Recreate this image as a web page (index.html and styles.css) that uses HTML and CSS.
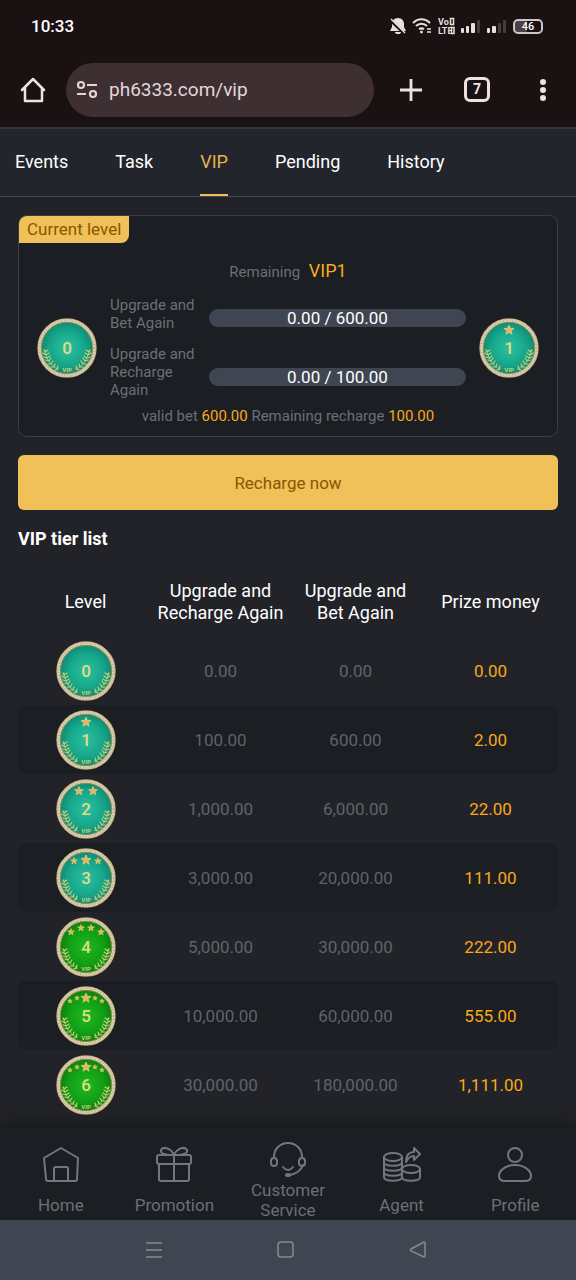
FILE: index.html
```html
<!DOCTYPE html>
<html lang="en">
<head>
    <meta charset="UTF-8">
    <meta name="viewport" content="width=device-width, initial-scale=1.0">
    <title>VIP</title>
    <link rel="stylesheet" href="styles.css">
</head>
<body>
    <!-- shared shapes for the level medals -->
    <svg class="defs" width="0" height="0" aria-hidden="true">
        <defs>
            <radialGradient id="teal">
                <stop offset="0" stop-color="#2cbfa0"/>
                <stop offset="0.6" stop-color="#17a88b"/>
                <stop offset="1" stop-color="#0b8471"/>
            </radialGradient>
            <radialGradient id="green">
                <stop offset="0" stop-color="#1fb81f"/>
                <stop offset="0.6" stop-color="#11a016"/>
                <stop offset="1" stop-color="#087a0c"/>
            </radialGradient>
            <path id="star" d="M0-5 1.4-1.7 5-1.5 2.2.8 3.1 4.3 0 2.3-3.1 4.3-2.2.8-5-1.5-1.4-1.7z" fill="#edb35a" stroke="#f5d98c" stroke-width="0.6"/>
            <g id="laurel" fill="none" stroke="#c5cf78" stroke-linecap="round">
                <path d="M8 32C9 41 14 48 21 51" stroke-width="0.7"/>
                <path d="M8 34l-1-2M8 34l3-2M9 37l-3-2M9 37l3-2M10 40l-3-1M10 40l3-2M12 43l-3-1M12 43l2-3M14 46l-3 0M14 46l2-3M17 49l-3 0M17 49l1-3M21 51l-3 1M20 51l1-3" stroke-width="1.2"/>
            </g>
            <g id="medal">
                <circle cx="30" cy="30" r="29" fill="none" stroke="#c9a468" stroke-width="1.4"/>
                <circle cx="30" cy="30" r="27.4" fill="none" stroke="#d6cfb4" stroke-width="3"/>
                <circle cx="30" cy="30" r="27.4" fill="none" stroke="#bcb398" stroke-width="2" stroke-dasharray="1 2"/>
                <circle cx="30" cy="30" r="25.6" fill="none" stroke="#a98a45" stroke-width="0.8"/>
                <use href="#laurel"/>
                <use href="#laurel" transform="matrix(-1 0 0 1 60 0)"/>
                <text x="30" y="54" class="medal-vip">VIP</text>
            </g>
        </defs>
    </svg>

    <header class="browser">
        <div class="status">
            <span class="clock">10:33</span>
            <div class="status-icons">
                <svg width="16" height="18" viewBox="0 0 16 18"><path d="M8 1c4 0 6 3 6 6v3l2 4H0l2-4V7c0-3 2-6 6-6z" fill="#e8dfe0"/><path d="M5 15h6a3 2 0 0 1-6 0z" fill="#e8dfe0"/><path d="M0 3l15 14" stroke="#1a1112" stroke-width="3"/><path d="M1 2l14 14" stroke="#e8dfe0" stroke-width="1.4"/></svg>
                <svg width="20" height="18" viewBox="0 0 20 18" fill="none" stroke="#e8dfe0" stroke-width="2"><path d="M1 6c5-5 12-5 17 0M4 9c3-3 8-3 11 0M7 12c2-1 3-1 5 0"/><circle cx="9.500" cy="15" r="1" fill="#e8dfe0" stroke-width="1"/><path d="M15 12h4M15 15h4" stroke-width="1.6"/></svg>
                <svg width="17" height="18" viewBox="0 0 17 18"><text x="0" y="8" class="volte">Vo</text><text x="0" y="17" class="volte">LTE</text><path d="M12.500 1.500h3v6h-3zM13.500 10.500h2.500v6h-2.500z" fill="none" stroke="#e8dfe0" stroke-width="1.500"/></svg>
                <svg width="20" height="18" viewBox="0 0 20 18" fill="#e8dfe0"><rect x="0" y="11" width="3" height="5" rx="1"/><rect x="5" y="9" width="3" height="7" rx="1"/><rect x="10" y="6" width="4" height="10" rx="1"/><rect x="16" y="3" width="3" height="13" rx="1" fill="#463b3d"/></svg>
                <svg width="20" height="18" viewBox="0 0 20 18" fill="#e8dfe0"><rect x="0" y="11" width="3" height="5" rx="1"/><rect x="5" y="9" width="4" height="7" rx="1"/><rect x="11" y="6" width="3" height="10" rx="1" fill="#463b3d"/><rect x="16" y="3" width="3" height="13" rx="1" fill="#463b3d"/></svg>
                <span class="battery">46</span>
            </div>
        </div>
        <div class="toolbar">
            <button class="icon-btn" aria-label="Home page">
                <svg width="26" height="26" viewBox="0 0 26 26" fill="none" stroke="#f0e2e3" stroke-width="2.500" stroke-linejoin="round" stroke-linecap="round"><path d="M2 13 13 2l11 11M5 11v13h17V11"/></svg>
            </button>
            <div class="address">
                <svg width="22" height="20" viewBox="0 0 22 20" fill="none" stroke="#e4d6d8" stroke-width="2.200"><circle cx="5" cy="5" r="3"/><path d="M11 5h10M1 14h9"/><circle cx="17" cy="14" r="3"/></svg>
                <input class="url" type="text" value="ph6333.com/vip" aria-label="Address">
            </div>
            <button class="icon-btn" aria-label="New tab">
                <svg width="24" height="24" viewBox="0 0 24 24" stroke="#f0e2e3" stroke-width="2.800"><path d="M1 12h22M12 1v22"/></svg>
            </button>
            <button class="icon-btn" aria-label="Open tabs"><span class="tab-count">7</span></button>
            <button class="icon-btn" aria-label="Menu">
                <svg width="24" height="24" viewBox="0 0 24 24" fill="#f0e2e3"><circle cx="12" cy="4" r="3"/><circle cx="12" cy="12" r="3"/><circle cx="12" cy="20" r="3"/></svg>
            </button>
        </div>
    </header>

    <nav class="tabs">
        <a href="#events">Events</a>
        <a href="#task">Task</a>
        <a href="#vip" class="active">VIP</a>
        <a href="#pending">Pending</a>
        <a href="#history">History</a>
    </nav>

    <main>
        <section class="card">
            <span class="tag">Current level</span>
            <p class="remaining">Remaining <span class="next">VIP1</span></p>
            <div class="progress">
                <svg class="medal" viewBox="0 0 60 60"><circle cx="30" cy="30" r="28" fill="url(#teal)"/><use href="#medal"/><text x="30" y="36" class="medal-num">0</text></svg>
                <div class="labels">
                    <span>Upgrade and Bet Again</span>
                    <span>Upgrade and Recharge Again</span>
                </div>
                <div class="bars">
                    <div class="bar">0.00 / 600.00</div>
                    <div class="bar">0.00 / 100.00</div>
                </div>
                <svg class="medal" viewBox="0 0 60 60"><circle cx="30" cy="30" r="28" fill="url(#teal)"/><use href="#medal"/><use href="#star" x="30" y="12"/><text x="30" y="36" class="medal-num">1</text></svg>
            </div>
            <p class="summary">valid bet <span>600.00</span> Remaining recharge <span>100.00</span></p>
        </section>

        <button class="recharge">Recharge now</button>

        <h2>VIP tier list</h2>
        <table>
            <thead>
                <tr>
                    <th>Level</th>
                    <th>Upgrade and Recharge Again</th>
                    <th>Upgrade and<br>Bet Again</th>
                    <th>Prize money</th>
                </tr>
            </thead>
            <tbody>
                <tr>
                    <td><svg class="medal" viewBox="0 0 60 60"><circle cx="30" cy="30" r="28" fill="url(#teal)"/><use href="#medal"/><text x="30" y="36" class="medal-num">0</text></svg></td>
                    <td>0.00</td>
                    <td>0.00</td>
                    <td>0.00</td>
                </tr>
                <tr>
                    <td><svg class="medal" viewBox="0 0 60 60"><circle cx="30" cy="30" r="28" fill="url(#teal)"/><use href="#medal"/><use href="#star" x="30" y="12"/><text x="30" y="36" class="medal-num">1</text></svg></td>
                    <td>100.00</td>
                    <td>600.00</td>
                    <td>2.00</td>
                </tr>
                <tr>
                    <td><svg class="medal" viewBox="0 0 60 60"><circle cx="30" cy="30" r="28" fill="url(#teal)"/><use href="#medal"/><use href="#star" transform="translate(23 12) scale(.9)"/><use href="#star" transform="translate(37 12) scale(.9)"/><text x="30" y="36" class="medal-num">2</text></svg></td>
                    <td>1,000.00</td>
                    <td>6,000.00</td>
                    <td>22.00</td>
                </tr>
                <tr>
                    <td><svg class="medal" viewBox="0 0 60 60"><circle cx="30" cy="30" r="28" fill="url(#teal)"/><use href="#medal"/><use href="#star" transform="translate(18 13) scale(.7)"/><use href="#star" x="30" y="12"/><use href="#star" transform="translate(42 13) scale(.7)"/><text x="30" y="36" class="medal-num">3</text></svg></td>
                    <td>3,000.00</td>
                    <td>20,000.00</td>
                    <td>111.00</td>
                </tr>
                <tr>
                    <td><svg class="medal" viewBox="0 0 60 60"><circle cx="30" cy="30" r="28" fill="url(#green)"/><use href="#medal"/><use href="#star" transform="translate(15 15) scale(.7)"/><use href="#star" transform="translate(25 11) scale(.7)"/><use href="#star" transform="translate(35 11) scale(.7)"/><use href="#star" transform="translate(45 15) scale(.7)"/><text x="30" y="36" class="medal-num">4</text></svg></td>
                    <td>5,000.00</td>
                    <td>30,000.00</td>
                    <td>222.00</td>
                </tr>
                <tr>
                    <td><svg class="medal" viewBox="0 0 60 60"><circle cx="30" cy="30" r="28" fill="url(#green)"/><use href="#medal"/><use href="#star" transform="translate(14 15) scale(.5)"/><use href="#star" transform="translate(21 12) scale(.5)"/><use href="#star" x="30" y="12"/><use href="#star" transform="translate(39 12) scale(.5)"/><use href="#star" transform="translate(46 15) scale(.5)"/><text x="30" y="36" class="medal-num">5</text></svg></td>
                    <td>10,000.00</td>
                    <td>60,000.00</td>
                    <td>555.00</td>
                </tr>
                <tr>
                    <td><svg class="medal" viewBox="0 0 60 60"><circle cx="30" cy="30" r="28" fill="url(#green)"/><use href="#medal"/><use href="#star" transform="translate(14 15) scale(.5)"/><use href="#star" transform="translate(21 12) scale(.5)"/><use href="#star" x="30" y="12"/><use href="#star" transform="translate(39 12) scale(.5)"/><use href="#star" transform="translate(46 15) scale(.5)"/><text x="30" y="36" class="medal-num">6</text></svg></td>
                    <td>30,000.00</td>
                    <td>180,000.00</td>
                    <td>1,111.00</td>
                </tr>
            </tbody>
        </table>
    </main>

    <footer>
        <nav class="bottom-nav">
            <a href="#home">
                <svg width="38" height="38" viewBox="0 0 38 38"><path d="M2 12 19 2l17 10-1 21q0 2-2 2H6q-2 0-2-2zM12 35V23q0-2 2-2h10q2 0 2 2v12"/></svg>
                Home
            </a>
            <a href="#promotion">
                <svg width="38" height="38" viewBox="0 0 38 38"><rect x="2" y="9" width="34" height="9" rx="2"/><path d="M4 18v15q0 2 2 2h26q2 0 2-2V18M19 9v26M19 9C8 9 5 7 6 4c2-4 10-2 13 5M19 9c11 0 14-2 13-5-2-4-10-2-13 5"/></svg>
                Promotion
            </a>
            <a href="#service" class="service">
                <svg width="38" height="38" viewBox="0 0 38 38"><path d="M5 16C5 8 11 2 19 2s14 6 14 14M34 24c-2 6-7 9-14 10M14 26c3 4 7 4 10 0"/><rect x="2" y="17" width="6" height="8" rx="3"/><rect x="30" y="17" width="6" height="8" rx="3"/><ellipse cx="19" cy="34" rx="2" ry="1"/></svg>
                Customer Service
            </a>
            <a href="#agent">
                <svg width="38" height="38" viewBox="0 0 38 38"><path d="M1 11v20c0 5 18 5 18 0V11M1 16c0 5 18 5 18 0M1 21c0 5 18 5 18 0M1 26c0 5 18 5 18 0"/><ellipse cx="10" cy="11" rx="9" ry="4"/><ellipse cx="28" cy="23" rx="9" ry="4"/><path d="M19 23v8c0 5 18 5 18 0v-8"/><path d="M23 16c0-7 3-10 8-10V2l6 6-6 6v-4c-4 0-6 2-8 6z"/></svg>
                Agent
            </a>
            <a href="#profile">
                <svg width="38" height="38" viewBox="0 0 38 38"><circle cx="19" cy="9" r="7"/><path d="M19 19c10 0 16 6 16 11 0 4-3 5-6 5H9c-3 0-6-1-6-5 0-5 6-11 16-11z"/></svg>
                Profile
            </a>
        </nav>
        <div class="system-nav">
            <button aria-label="Recent apps"><svg width="18" height="18" viewBox="0 0 18 18"><path d="M1 2h16M1 9h16M1 16h16"/></svg></button>
            <button aria-label="Home screen"><svg width="18" height="18" viewBox="0 0 18 18"><rect x="1" y="1" width="15" height="15" rx="3"/></svg></button>
            <button aria-label="Back"><svg width="18" height="18" viewBox="0 0 18 18"><path d="M2 8 15 1q1 0 1 1v13q0 1-1 1L2 10q-1-1 0-2z"/></svg></button>
        </div>
    </footer>
</body>
</html>
```
FILE: styles.css
```css
* {
    box-sizing: border-box;
}
body {
    margin: 0;
    min-height: 100vh;
    display: flex;
    flex-direction: column;
    font-family: Roboto, "Liberation Sans", sans-serif;
    background-color: #222328;
    color: #fff;
}
a {
    color: inherit;
    text-decoration: none;
}
button {
    font-family: inherit;
    border: none;
    background: none;
    padding: 0;
    cursor: pointer;
}
p, h2 {
    margin: 0;
}
svg {
    display: block;
}
.defs {
    position: absolute;
}

/* browser bar */
.browser {
    background-color: #1a1112;
    border-bottom: 2px solid #38333a;
}
.status {
    display: flex;
    justify-content: space-between;
    align-items: center;
    height: 52px;
    padding: 0 33px 0 31px;
}
.clock {
    font-size: 17px;
    font-weight: 500;
}
.status-icons {
    display: flex;
    align-items: center;
    gap: 6px;
}
.volte {
    font-family: "Liberation Sans Narrow", Roboto, sans-serif;
    font-size: 9px;
    font-weight: 700;
    fill: #e8dfe0;
}
.battery {
    width: 30px;
    height: 15px;
    border: 2px solid #cfc5c6;
    border-radius: 5px;
    font-size: 11px;
    font-weight: 500;
    line-height: 11px;
    text-align: center;
    background: linear-gradient(to right, #4a4142 46%, #1a1112 46%);
}
.toolbar {
    display: flex;
    align-items: center;
    height: 75px;
}
.icon-btn {
    width: 66px;
    height: 48px;
    display: flex;
    align-items: center;
    justify-content: center;
}
.address {
    flex: 1;
    min-width: 0;
    height: 54px;
    display: flex;
    align-items: center;
    gap: 11px;
    margin-right: 4px;
    padding: 0 10px;
    border-radius: 27px;
    background-color: #3e2f32;
}
.url {
    flex: 1;
    min-width: 0;
    border: none;
    padding: 0;
    background: none;
    font-family: inherit;
    font-size: 19px;
    color: #e4d6d8;
}
.tab-count {
    width: 26px;
    height: 25px;
    border: 3px solid #f0e2e3;
    border-radius: 6px;
    font-size: 14px;
    font-weight: 700;
    line-height: 19px;
    color: #f0e2e3;
}

/* page tabs */
.tabs {
    display: flex;
    gap: 47px;
    height: 68px;
    padding: 0 15px;
    background-color: #22252c;
    border-bottom: 1px solid #44464c;
    font-size: 18px;
    line-height: 65px;
}
.tabs .active {
    color: #e8b44b;
    border-bottom: 2px solid #f0c059;
}

main {
    flex: 1;
    padding: 18px 18px 8px;
}
.card {
    padding-bottom: 10px;
    background-color: #1b1e23;
    border: 1px solid #3b3d42;
    border-radius: 9px;
    color: #6b6f77;
    font-size: 15px;
}
.tag {
    display: inline-block;
    padding: 0 8px;
    border-radius: 8px 0 8px 0;
    background-color: #f0c059;
    color: #8a5600;
    font-size: 17px;
    line-height: 27px;
}
.remaining {
    margin-top: 16px;
    text-align: center;
    line-height: 24px;
}
.next {
    margin-left: 5px;
    font-size: 18px;
    color: #faa819;
}
.progress {
    display: flex;
    align-items: center;
    gap: 13px;
    margin-top: 12px;
    padding: 0 18px;
}
.medal {
    width: 60px;
    height: 60px;
    flex: none;
}
.medal-num {
    font-size: 17px;
    font-weight: 500;
    text-anchor: middle;
    fill: #e3dc82;
}
.medal-vip {
    font-size: 6px;
    font-weight: 700;
    text-anchor: middle;
    fill: #c5cf78;
}
.labels {
    width: 86px;
    display: flex;
    flex-direction: column;
    gap: 13px;
    line-height: 18px;
}
.bars {
    flex: 1;
    display: flex;
    flex-direction: column;
    gap: 41px;
}
.bar {
    height: 18px;
    border-radius: 9px;
    background-color: #3f4651;
    color: #fff;
    font-size: 17px;
    line-height: 19px;
    text-align: center;
}
.summary {
    margin-top: 7px;
    text-align: center;
    line-height: 20px;
}
.summary span {
    color: #faa819;
}
.recharge {
    display: block;
    width: 100%;
    height: 55px;
    margin: 18px 0;
    border-radius: 6px;
    background-color: #f0c059;
    color: #8a5600;
    font-size: 17px;
}
h2 {
    font-size: 18px;
    line-height: 22px;
}

/* tier table */
table {
    width: 100%;
    margin-top: 17px;
    table-layout: fixed;
    border-collapse: separate;
    border-spacing: 0;
    text-align: center;
    font-size: 17px;
}
th {
    height: 69px;
    padding: 0;
    font-size: 18px;
    font-weight: 400;
    line-height: 22px;
}
td {
    height: 69px;
    padding: 0;
    color: #5f636b;
}
td .medal {
    margin: 0 auto;
}
td:first-child {
    border-radius: 8px 0 0 8px;
}
td:last-child {
    border-radius: 0 8px 8px 0;
    color: #faa819;
}
tbody tr:nth-child(even) td {
    background-color: #1b1e23;
}

/* bottom bars */
footer {
    position: sticky;
    bottom: 0;
    box-shadow: 0 0 16px rgba(0, 0, 0, 0.5);
}
.bottom-nav {
    display: grid;
    grid-template-columns: repeat(5, 1fr);
    height: 92px;
    padding: 0 4px;
    background-color: #1b1e23;
    color: #6b6f77;
    font-size: 17px;
    line-height: 20px;
    text-align: center;
}
.bottom-nav a {
    display: flex;
    flex-direction: column;
    align-items: center;
    justify-content: flex-end;
    gap: 11px;
    padding-bottom: 5px;
}
.bottom-nav .service {
    gap: 1px;
    padding-bottom: 0;
}
.bottom-nav svg {
    fill: none;
    stroke: #717780;
    stroke-width: 2;
    stroke-linejoin: round;
    stroke-linecap: round;
}
.system-nav {
    display: flex;
    justify-content: center;
    gap: 114px;
    height: 60px;
    padding-right: 4px;
    background-color: #3f4651;
}
.system-nav svg {
    fill: none;
    stroke: #858b94;
    stroke-width: 1.5;
}
```
